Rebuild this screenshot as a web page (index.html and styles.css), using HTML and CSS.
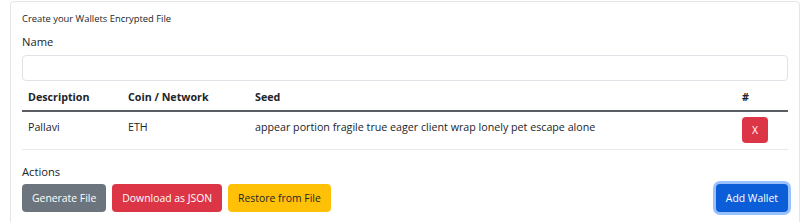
FILE: index.html
```html
<!DOCTYPE html>
<html lang="en">
<head>
<meta charset="UTF-8">
<meta name="viewport" content="width=device-width, initial-scale=1.0">
<link rel="stylesheet" href="styles.css">
<title>Wallets</title>
</head>
<body>
<div class="card">
  <div class="card-body">
    <div class="hint">Create your Wallets Encrypted File</div>
    <label class="label" for="name">Name</label>
    <input class="input" id="name" type="text">

    <table class="table">
      <thead>
        <tr>
          <th class="col-desc">Description</th>
          <th class="col-coin">Coin / Network</th>
          <th>Seed</th>
          <th class="col-del">#</th>
        </tr>
      </thead>
      <tbody>
        <tr>
          <td>Pallavi</td>
          <td>ETH</td>
          <td>appear portion fragile true eager client wrap lonely pet escape alone</td>
          <td class="col-del"><button class="btn btn-danger btn-x">X</button></td>
        </tr>
      </tbody>
    </table>

    <div class="label actions-label">Actions</div>
    <div class="actions">
      <button class="btn btn-secondary">Generate File</button>
      <button class="btn btn-danger">Download as JSON</button>
      <button class="btn btn-warning">Restore from File</button>
      <button class="btn btn-primary focus">Add Wallet</button>
    </div>
  </div>
</div>
</body>
</html>
```

FILE: styles.css
```css
body {
  margin: 0;
  background: #fff;
  font-family: "Open Sans", "Noto Sans", sans-serif;
  color: #212529;
}

.card {
  margin: 1px 0 0 10px;
  width: 788px;
  height: 240px;
  border: 1px solid #e3e5e8;
  border-radius: 4px;
}

.card-body {
  display: flex;
  flex-direction: column;
  padding: 9px 11px;
}

.hint {
  font-size: 9.4px;
  line-height: 16px;
}

.label {
  display: block;
  font-size: 11.2px;
  line-height: 18px;
  margin-top: 6px;
  margin-bottom: 4px;
}

.input {
  height: 26px;
  box-sizing: border-box;
  border: 1px solid #dfe3e7;
  border-radius: 4px;
  margin: 0;
  padding: 0 8px;
}

.table {
  margin-top: 2px;
  border-collapse: collapse;
  width: 100%;
  font-size: 10.7px;
  line-height: 18px;
}

.table th {
  text-align: left;
  font-weight: 700;
  padding: 5px 6px 4px;
  border-bottom: 2px solid #5a5e63;
}

.table td {
  vertical-align: top;
  padding: 6px 6px 6px;
  border-bottom: 1px solid #e6e8eb;
}

.col-desc { width: 88px; }
.col-coin { width: 115px; }
.col-del { width: 40px; }

.table td.col-del {
  padding-top: 5px;
}

.actions-label {
  margin-top: 13px;
  margin-bottom: 3px;
}

.actions {
  display: flex;
  gap: 6px;
}

.btn {
  font-family: inherit;
  font-size: 10.4px;
  line-height: 18px;
  padding: 4px 9px;
  border: 1px solid transparent;
  border-radius: 4px;
  color: #fff;
}

.btn-x {
  width: 26px;
  height: 26px;
  padding: 0;
}

.btn-secondary { background: #6c757d; }
.btn-danger { background: #dc3545; }
.btn-warning { background: #ffc107; color: #212529; }

.btn-primary {
  background: #0b5ed7;
  margin-left: auto;
}

.btn-primary.focus {
  box-shadow: 0 0 0 3px rgba(49, 132, 253, 0.5);
}
```
